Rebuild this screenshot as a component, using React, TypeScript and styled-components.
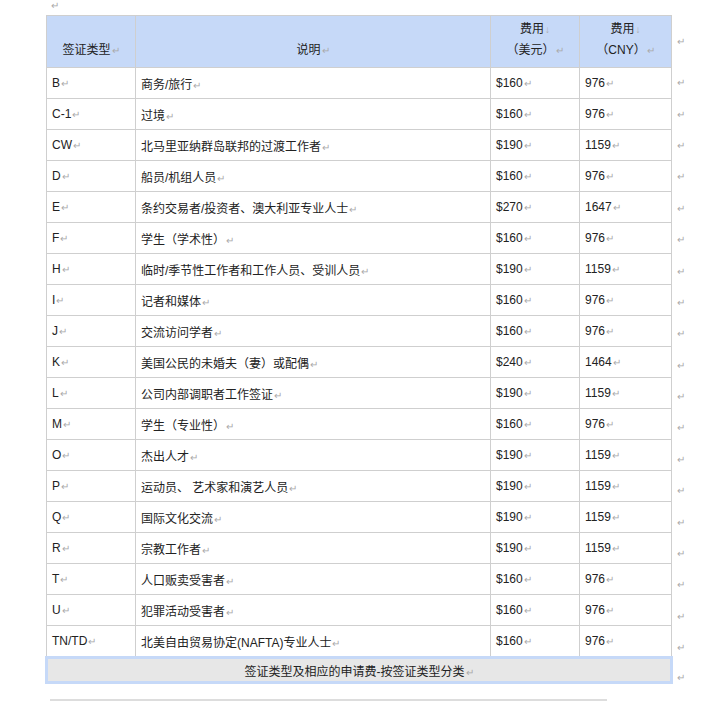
import React from "react";
import styled, { createGlobalStyle } from "styled-components";

const G = createGlobalStyle`
  body { margin: 0; background: #fff; font-family: "Liberation Sans", "Noto Sans CJK SC", sans-serif; font-size: 12px; color: #222; }
`;
const Page = styled.div`padding: 0 0 0 45px;`;
const TopMark = styled.div`height: 15px; line-height: 10px; padding-left: 5px;`;
const M = styled.span`color: #aaa; font-size: 10px; margin-left: 1px;`;
const Wrap = styled.div`display: flex; align-items: flex-start;`;
const Table = styled.table`
  border-collapse: collapse; width: 625px; table-layout: fixed;
`;
const Col = styled.col<{ $w: number }>`width: ${p => p.$w}px;`;
const Th = styled.th`
  background: #c6d9f8; border: 1px solid #cfcfcf;
  font-weight: normal; height: 45px; padding: 0 4px 6px; vertical-align: bottom;
  text-align: center; line-height: 20px; box-sizing: content-box;
`;
const Td = styled.td`
  border: 1px solid #cfcfcf; height: 30px; padding: 0 5px; white-space: nowrap; overflow: hidden;
`;
const Cap = styled.td`
  background: #e7e7e7; border: 3px solid #c6d9f8; height: 22px; text-align: center; padding: 0;
`;
const Side = styled.div`display: flex; flex-direction: column; padding-left: 4px;`;
const SideM = styled.div<{ $h: number }>`height: ${p => p.$h}px; display: flex; align-items: center; color: #aaa; font-size: 10px;`;
const Rule = styled.div`margin: 15px 0 0 5px; width: 557px; height: 2px; background: #ddd;`;

const rows: [string, string, string, string][] = [
  ["B", "商务/旅行", "$160", "976"],
  ["C-1", "过境", "$160", "976"],
  ["CW", "北马里亚纳群岛联邦的过渡工作者", "$190", "1159"],
  ["D", "船员/机组人员", "$160", "976"],
  ["E", "条约交易者/投资者、澳大利亚专业人士", "$270", "1647"],
  ["F", "学生（学术性）", "$160", "976"],
  ["H", "临时/季节性工作者和工作人员、受训人员", "$190", "1159"],
  ["I", "记者和媒体", "$160", "976"],
  ["J", "交流访问学者", "$160", "976"],
  ["K", "美国公民的未婚夫（妻）或配偶", "$240", "1464"],
  ["L", "公司内部调职者工作签证", "$190", "1159"],
  ["M", "学生（专业性）", "$160", "976"],
  ["O", "杰出人才", "$190", "1159"],
  ["P", "运动员、 艺术家和演艺人员", "$190", "1159"],
  ["Q", "国际文化交流", "$190", "1159"],
  ["R", "宗教工作者", "$190", "1159"],
  ["T", "人口贩卖受害者", "$160", "976"],
  ["U", "犯罪活动受害者", "$160", "976"],
  ["TN/TD", "北美自由贸易协定(NAFTA)专业人士", "$160", "976"],
];

export default function App() {
  return (
    <Page>
      <G />
      <TopMark><M>↵</M></TopMark>
      <Wrap>
        <div>
          <Table>
            <colgroup>
              <Col $w={89} /><Col $w={355} /><Col $w={89} /><Col $w={92} />
            </colgroup>
            <thead>
              <tr>
                <Th>签证类型<M>↵</M></Th>
                <Th>说明<M>↵</M></Th>
                <Th>费用<M>↓</M><br />（美元）<M>↵</M></Th>
                <Th>费用<M>↓</M><br />（CNY）<M>↵</M></Th>
              </tr>
            </thead>
            <tbody>
              {rows.map(r => (
                <tr key={r[0]}>
                  {r.map((c, i) => <Td key={i}>{c}<M>↵</M></Td>)}
                </tr>
              ))}
              <tr><Cap colSpan={4}>签证类型及相应的申请费-按签证类型分类<M>↵</M></Cap></tr>
            </tbody>
          </Table>
          <Rule />
        </div>
        <Side>
          <SideM $h={52}>↵</SideM>
          {rows.map(r => <SideM key={r[0]} $h={31.4}>↵</SideM>)}
          <SideM $h={28}>↵</SideM>
        </Side>
      </Wrap>
    </Page>
  );
}
